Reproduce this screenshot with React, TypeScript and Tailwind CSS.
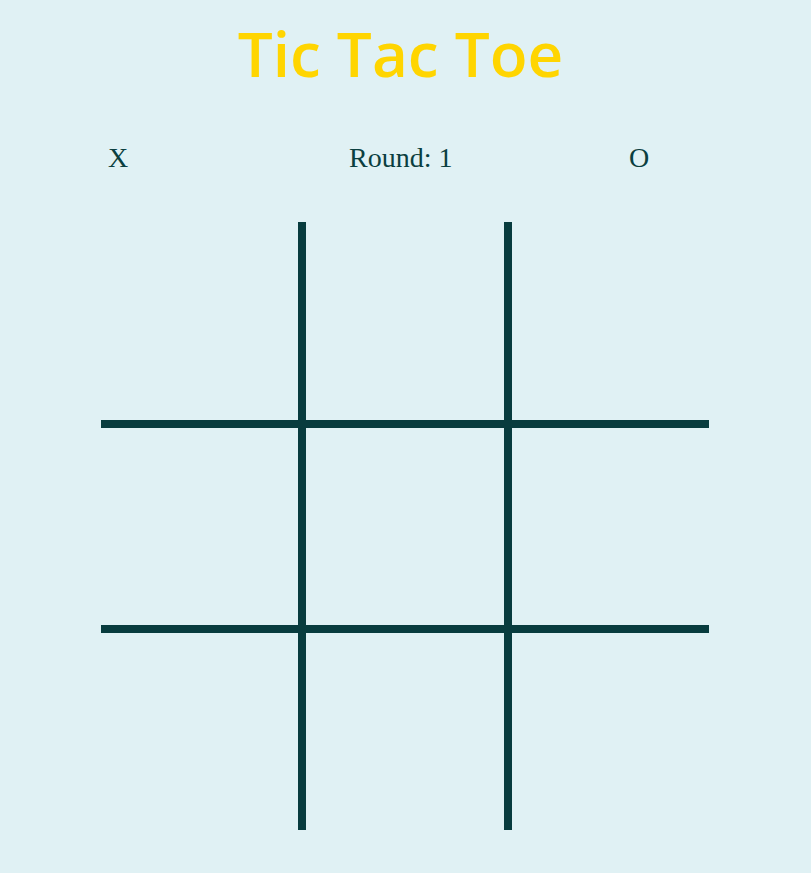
export default function App() {
  const cells = Array.from({ length: 9 }, (_, i) => i)

  return (
    <div className="flex min-h-[873px] w-full flex-col items-center bg-[#e0f1f4] pr-px pt-[13px]">
      <h1 className="pr-[9px] text-center text-[62px] font-semibold leading-[80px] text-[#ffd500] [font-family:'Open_Sans',sans-serif]">
        Tic Tac Toe
      </h1>

      {/* scoreboard */}
      <div className="mt-[45px] flex w-[608px] items-center text-[28px] leading-[40px] text-[#0b3f40] [font-family:'Liberation_Serif',serif]">
        <span className="w-[248px] pl-[7px]">X</span>
        <span className="w-[280px]">Round: 1</span>
        <span>O</span>
      </div>

      {/* board */}
      <div className="mt-[44px] grid h-[608px] w-[608px] grid-cols-[197px_198px_197px] grid-rows-[198px_197px_197px] gap-2 bg-[#083c3e]">
        {cells.map((c) => (
          <button key={c} className="bg-[#e0f1f4]" aria-label={`cell ${c + 1}`} />
        ))}
      </div>
    </div>
  )
}
